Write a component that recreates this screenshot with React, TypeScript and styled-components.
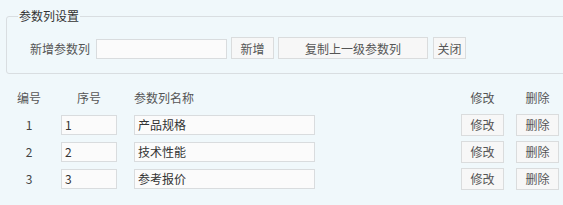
import React, {useState} from "react";
import styled, {createGlobalStyle} from "styled-components";

const GlobalStyle = createGlobalStyle`
  html, body {
    margin: 0;
    padding: 0;
    background: #f0f8fb;
    overflow: hidden;
  }
  body {
    font-family: "Noto Sans CJK SC", "Noto Sans", sans-serif;
    font-size: 12px;
    color: #444;
  }
`;

const Page = styled.div`
  padding-top: 8px;
  width: 563px;
`;

const SettingsBox = styled.fieldset`
  margin: 0 -20px 0 6px;
  padding: 0 0 14px 11px;
  border: 1px solid #d9dee1;
  border-radius: 3px;
`;

const Legend = styled.legend`
  padding: 0 1px;
  line-height: 16px;
  color: #333;
`;

const AddRow = styled.div`
  display: flex;
  align-items: flex-end;
  gap: 4px;
  padding: 13px 0 0 12px;
`;

const Label = styled.span`
  width: 60px;
  margin-right: 2px;
  line-height: 20px;
  color: #555;
`;

const TextInput = styled.input<{ $width: number }>`
  box-sizing: border-box;
  width: ${p => p.$width}px;
  height: 20px;
  margin: 0;
  padding: 0 3px;
  border: 1px solid #d9dcde;
  background: #fbfbfb;
  font-family: inherit;
  font-size: 12px;
  color: #333;
  outline: none;
`;

const Button = styled.button<{ $width: number; $gapLeft?: number }>`
  box-sizing: border-box;
  width: ${p => p.$width}px;
  height: 22px;
  margin: 0 0 0 ${p => p.$gapLeft || 0}px;
  padding: 0;
  border: 1px solid #dadcdd;
  background: #f7f7f7;
  font-family: inherit;
  font-size: 12px;
  color: #555;
  cursor: pointer;
`;

const Table = styled.div`
  display: grid;
  grid-template-columns: 58px 62px 335px 55px 53px;
  grid-auto-rows: 27px;
  align-items: center;
  margin-top: 10px;
`;

const Cell = styled.div<{ $align?: "center" | "start"; $indent?: number; $padRight?: number }>`
  display: flex;
  justify-content: ${p => (p.$align === "start" ? "flex-start" : "center")};
  padding-left: ${p => p.$indent || 0}px;
  padding-right: ${p => p.$padRight || 0}px;
`;

const HeadCell = styled(Cell)`
  color: #555;
`;

const NumberText = styled.span`
  color: #444;
`;

interface IParamRow {
  id: number;
  order: string;
  name: string;
}

const initialRows: IParamRow[] = [
  {id: 1, order: "1", name: "产品规格"},
  {id: 2, order: "2", name: "技术性能"},
  {id: 3, order: "3", name: "参考报价"},
];

const App: React.FunctionComponent = () => {
  const [rows, setRows] = useState(initialRows);
  const [newName, setNewName] = useState("");

  const update = (id: number, key: "order" | "name", value: string) =>
    setRows(rows.map(r => (r.id === id ? {...r, [key]: value} : r)));

  return (
    <Page>
      <GlobalStyle/>
      <SettingsBox>
        <Legend>参数列设置</Legend>
        <AddRow>
          <Label>新增参数列</Label>
          <TextInput $width={131} value={newName} onChange={e => setNewName(e.target.value)}/>
          <Button $width={43}>新增</Button>
          <Button $width={150}>复制上一级参数列</Button>
          <Button $width={33} $gapLeft={1}>关闭</Button>
        </AddRow>
      </SettingsBox>
      <Table>
        <HeadCell>编号</HeadCell>
        <HeadCell>序号</HeadCell>
        <HeadCell $align="start" $indent={14}>参数列名称</HeadCell>
        <HeadCell>修改</HeadCell>
        <HeadCell $indent={6} $padRight={4}>删除</HeadCell>
        {rows.map(row => (
          <React.Fragment key={row.id}>
            <Cell><NumberText>{row.id}</NumberText></Cell>
            <Cell>
              <TextInput $width={56} value={row.order} onChange={e => update(row.id, "order", e.target.value)}/>
            </Cell>
            <Cell $align="start" $indent={14}>
              <TextInput $width={181} value={row.name} onChange={e => update(row.id, "name", e.target.value)}/>
            </Cell>
            <Cell><Button $width={43}>修改</Button></Cell>
            <Cell $indent={6} $padRight={4}><Button $width={43}>删除</Button></Cell>
          </React.Fragment>
        ))}
      </Table>
    </Page>
  );
};

export default App;
